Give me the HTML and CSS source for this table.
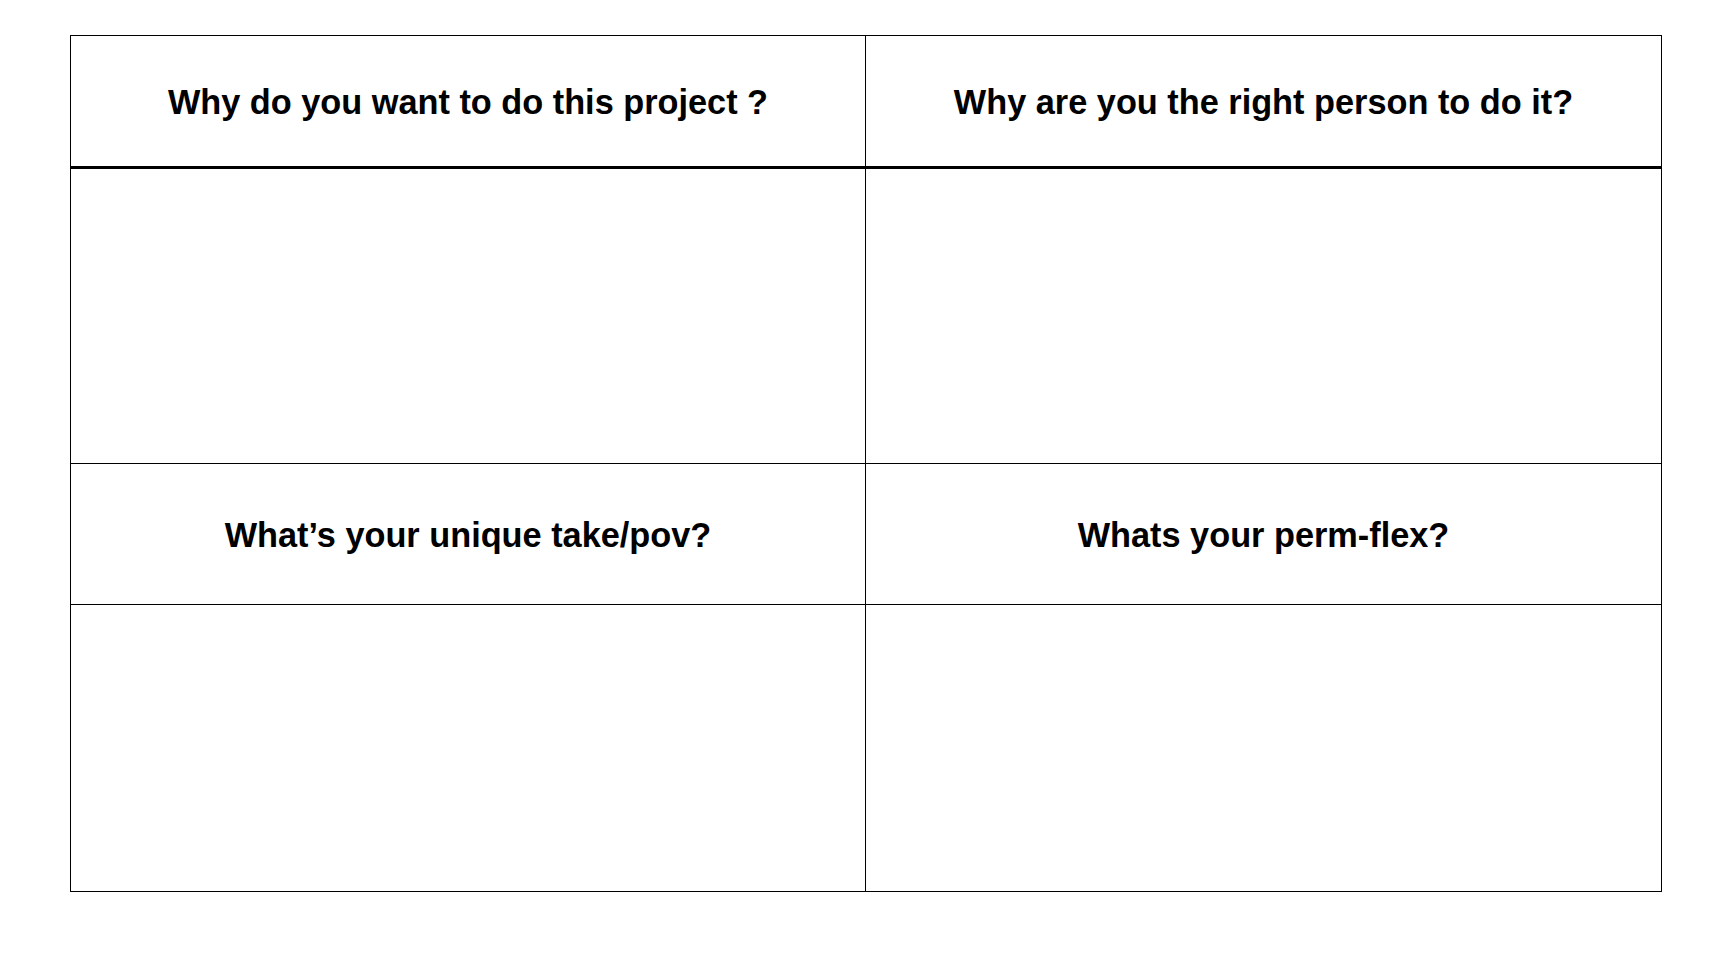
FILE: index.html
```html
<!DOCTYPE html>
<html>
<head>
<meta charset="utf-8">
<link rel="stylesheet" href="styles.css">
</head>
<body>
<div class="sheet">
  <div class="cell head head-top">Why do you want to do this project ?</div>
  <div class="cell head head-top last-col">Why are you the right person to do it?</div>
  <div class="cell body-a"></div>
  <div class="cell body-a last-col"></div>
  <div class="cell head head-mid">What’s your unique take/pov?</div>
  <div class="cell head head-mid last-col">Whats your perm-flex?</div>
  <div class="cell last-row"></div>
  <div class="cell last-row last-col"></div>
</div>
</body>
</html>
```
FILE: styles.css
```css
* { box-sizing: border-box; }
html, body { margin: 0; padding: 0; background: #fff; }
body { font-family: "Liberation Sans", Arial, sans-serif; color: #000; }
.sheet {
  margin: 35px 0 0 70px;
  width: 1592px;
  border: 1px solid #000;
  display: grid;
  grid-template-columns: 795px 795px;
  grid-template-rows: 133px 295px 141px 286px;
}
.cell {
  border-right: 1px solid #000;
  border-bottom: 1px solid #000;
}
.last-col { border-right: none; }
.last-row { border-bottom: none; }
.head {
  display: flex;
  align-items: center;
  justify-content: center;
  font-weight: bold;
  font-size: 34.3px;
  letter-spacing: 0;
}
.head-top { border-bottom: 3px solid #000; padding-top: 3px; }
.head-mid { padding-top: 2px; }
```
